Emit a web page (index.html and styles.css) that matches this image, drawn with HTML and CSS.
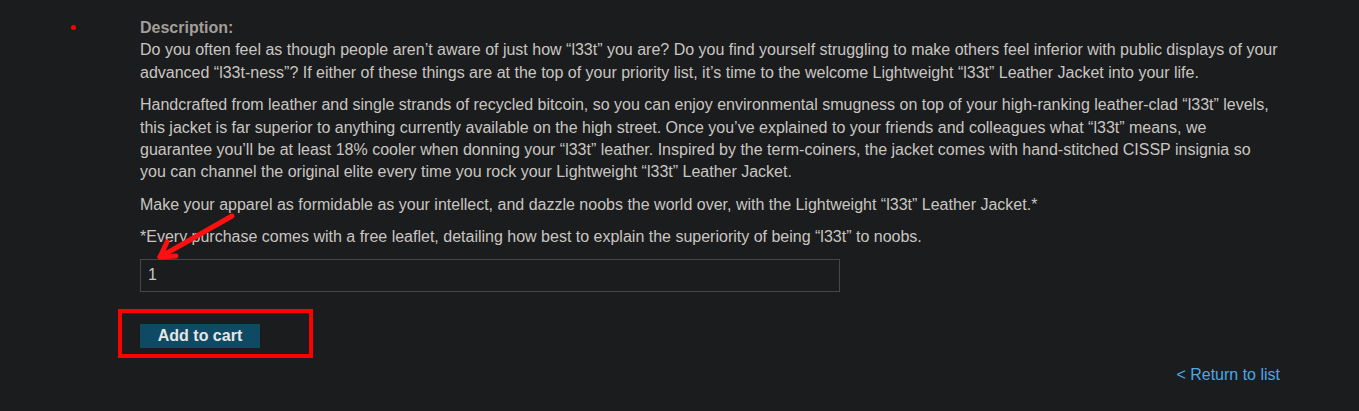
FILE: index.html
```html
<!DOCTYPE html>
<html lang="en">
<head>
  <meta charset="UTF-8" />
  <title>Lightweight "l33t" Leather Jacket</title>
  <link rel="stylesheet" href="styles.css">
</head>
<body>
  <div class="page">
    <span class="dot"></span>
    <svg class="arrow" width="100" height="60" viewBox="0 0 100 60">
      <path d="M92 6 L20 47" />
      <path d="M27 32 L20 47 L36 46" />
    </svg>
    <section class="product">
      <label class="label">Description:</label>
      <p>Do you often feel as though people aren’t aware of just how “l33t” you are? Do you find yourself struggling to make others feel inferior with public displays of your advanced “l33t-ness”? If either of these things are at the top of your priority list, it’s time to the welcome Lightweight “l33t” Leather Jacket into your life.</p>
      <p>Handcrafted from leather and single strands of recycled bitcoin, so you can enjoy environmental smugness on top of your high-ranking leather-clad “l33t” levels, this jacket is far superior to anything currently available on the high street. Once you’ve explained to your friends and colleagues what “l33t” means, we guarantee you’ll be at least 18% cooler when donning your “l33t” leather. Inspired by the term-coiners, the jacket comes with hand-stitched CISSP insignia so you can channel the original elite every time you rock your Lightweight “l33t” Leather Jacket.</p>
      <p>Make your apparel as formidable as your intellect, and dazzle noobs the world over, with the Lightweight “l33t” Leather Jacket.*</p>
      <p>*Every purchase comes with a free leaflet, detailing how best to explain the superiority of being “l33t” to noobs.</p>
      <form class="cart">
        <input class="qty" type="text" name="quantity" value="1">
        <div class="cart-action">
          <span class="highlight"></span>
          <button type="submit">Add to cart</button>
        </div>
      </form>
      <div class="back">
        <a href="#">&lt; Return to list</a>
      </div>
    </section>
  </div>
</body>
</html>
```

FILE: styles.css
```css
html, body {
  margin: 0;
  background-color: #1b1c1e;
}
body {
  font-family: "Liberation Sans", Arial, sans-serif;
  font-size: 16px;
  line-height: 22.4px;
  color: #c9c6c1;
}
.page {
  position: relative;
  padding: 17px 79px 0 140px;
  height: 394px;
}
.dot {
  position: absolute;
  left: 71px;
  top: 25px;
  width: 5px;
  height: 5px;
  border-radius: 50%;
  background-color: #ff0000;
}
.arrow {
  position: absolute;
  left: 140px;
  top: 210px;
  fill: none;
  stroke: #ff1010;
  stroke-width: 5;
  stroke-linecap: round;
  stroke-linejoin: round;
  z-index: 2;
}
.label {
  display: block;
  font-weight: bold;
  color: #a39e98;
}
.product p {
  margin: 0 0 10px;
}
.cart {
  margin-top: 8px;
}
.qty {
  display: block;
  box-sizing: border-box;
  width: 700px;
  height: 33px;
  padding: 0 7px;
  background-color: #1b1c1e;
  border: 1px solid #46474a;
  color: #c9c6c1;
  font-family: inherit;
  font-size: 16px;
}
.cart-action {
  position: relative;
  margin-top: 32px;
  width: 120px;
}
.highlight {
  position: absolute;
  left: -22px;
  top: -15px;
  width: 187px;
  height: 41px;
  border: 4px solid #ff0000;
}
.cart-action button {
  display: block;
  width: 120px;
  height: 24px;
  padding: 0;
  border: none;
  background-color: #0f4a65;
  color: #e6e6e6;
  font-family: inherit;
  font-weight: bold;
  font-size: 16px;
}
.back {
  text-align: right;
  margin-top: 16px;
}
.back a {
  color: #4aa8e6;
  text-decoration: none;
}
```
